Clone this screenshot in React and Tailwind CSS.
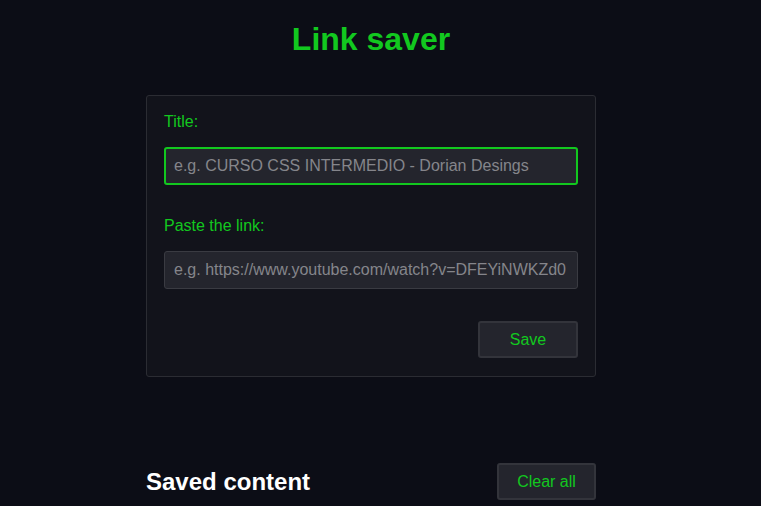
import { useState } from 'react';

// Link saver — title + link form, and the saved list header below.
export default function App() {
  const [title, setTitle] = useState('');
  const [link, setLink] = useState('');

  return (
    <div className="min-h-[506px] bg-[#0c0d16] font-['Liberation_Sans',Arial,sans-serif]">
      <div className="w-[742px]">
        <h1 className="pt-[21px] pb-[37px] text-center text-[32px] leading-[37px] font-bold text-[#12c81f]">Link saver</h1>

        <form
          onSubmit={e => e.preventDefault()}
          className="mx-auto w-[450px] rounded-[3px] border border-[#2b2c33] bg-[#12131b] px-[17px] pt-[17px] pb-[18px]"
        >
          <label className="block text-base leading-[18px] text-[#12c81f]">Title:</label>
          <input
            autoFocus
            value={title}
            onChange={e => setTitle(e.target.value)}
            placeholder="e.g. CURSO CSS INTERMEDIO - Dorian Desings"
            className="mt-[16px] block h-[38px] w-full rounded-[3px] border-2 border-[#12c81f] bg-[#24252d] px-[8px] text-base text-[#d0d0d0] caret-white outline-none placeholder:text-[#85858b]"
          />

          <label className="mt-[32px] block text-base leading-[18px] text-[#12c81f]">Paste the link:</label>
          <input
            value={link}
            onChange={e => setLink(e.target.value)}
            placeholder="e.g. https://www.youtube.com/watch?v=DFEYiNWKZd0"
            className="mt-[16px] block h-[38px] w-full rounded-[3px] border border-[#3a3b42] bg-[#24252d] px-[9px] text-base text-[#d0d0d0] outline-none placeholder:text-[#85858b]"
          />

          <div className="mt-[32px] flex justify-end">
            <button className="h-[37px] w-[100px] rounded-[3px] border-2 border-[#33343b] bg-[#24252d] text-base text-[#12c81f]">Save</button>
          </div>
        </form>

        <div className="mx-auto mt-[86px] flex w-[450px] items-center justify-between">
          <h2 className="text-[24px] leading-[28px] font-bold text-white">Saved content</h2>
          <button className="h-[37px] w-[99px] rounded-[3px] border-2 border-[#33343b] bg-[#24252d] text-base text-[#12c81f]">Clear all</button>
        </div>
      </div>
    </div>
  );
}
